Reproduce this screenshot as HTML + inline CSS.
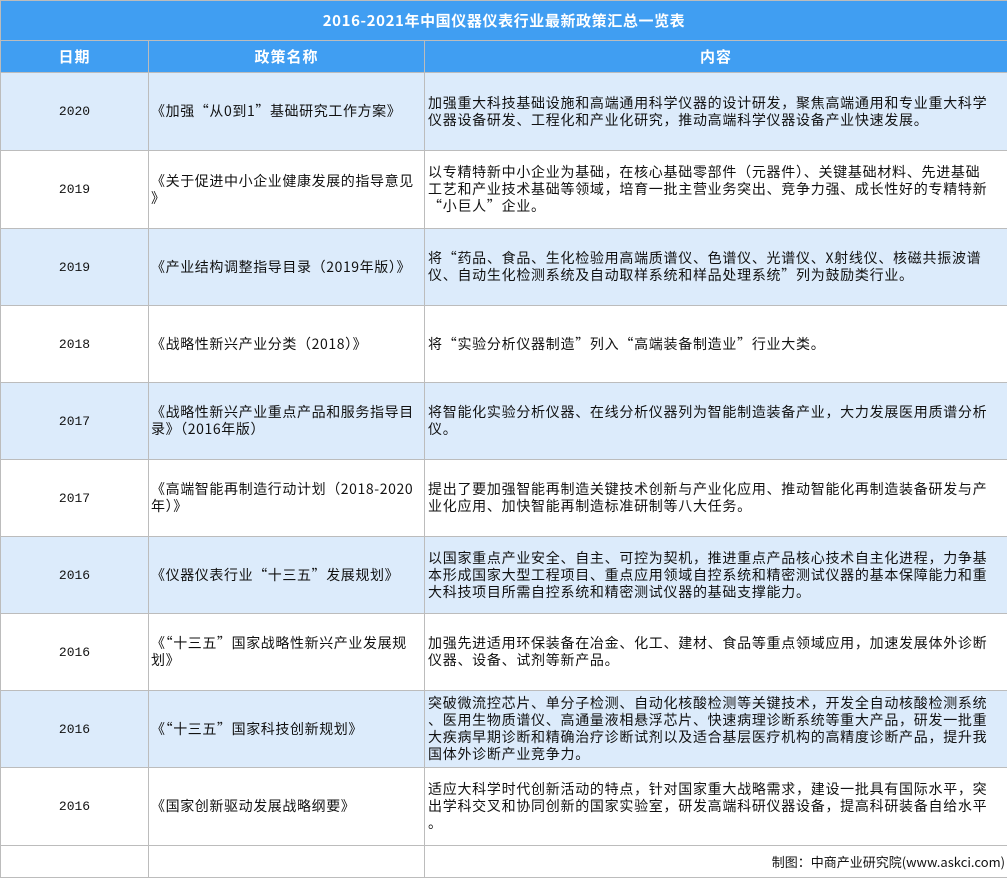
<!DOCTYPE html>
<html><head><meta charset="utf-8"><style>
body{margin:0;width:1007px;height:877px;background:#fff;font-family:"Noto Sans CJK SC","Liberation Sans",sans-serif;font-size:14px;color:#111;overflow:hidden}
table{border-collapse:collapse;width:1007px;table-layout:fixed;position:absolute;left:0;top:0}
td{border:1px solid #bcbcbc;padding:0 2px;line-height:17px;vertical-align:middle;letter-spacing:0.6px;white-space:nowrap}
.t{background:#409ef2;color:#fff;font-weight:bold;font-size:15px;text-align:center;height:39px}
.h td{background:#409ef2;color:#fff;font-weight:bold;font-size:15px;text-align:center;height:31px;letter-spacing:1px}
.b{background:#dcebfb}
td.c{text-align:center;font-family:"Liberation Mono",monospace;font-size:13px;letter-spacing:0}
td.d{text-align:left;padding-left:3px;letter-spacing:0.72px}
</style></head><body>
<table>
<colgroup><col style="width:148px"><col style="width:276px"><col style="width:583px"></colgroup>
<tr><td colspan="3" class="t">2016-2021年中国仪器仪表行业最新政策汇总一览表</td></tr>
<tr class="h"><td>日期</td><td>政策名称</td><td>内容</td></tr>
<tr class="b" style="height:78px"><td class="c">2020</td><td>《加强“从0到1”基础研究工作方案》</td><td class="d">加强重大科技基础设施和高端通用科学仪器的设计研发，聚焦高端通用和专业重大科学<br>仪器设备研发、工程化和产业化研究，推动高端科学仪器设备产业快速发展。</td></tr>
<tr style="height:78px"><td class="c">2019</td><td>《关于促进中小企业健康发展的指导意见<br>》</td><td class="d">以专精特新中小企业为基础，在核心基础零部件（元器件）、关键基础材料、先进基础<br>工艺和产业技术基础等领域，培育一批主营业务突出、竞争力强、成长性好的专精特新<br>“小巨人”企业。</td></tr>
<tr class="b" style="height:77px"><td class="c">2019</td><td>《产业结构调整指导目录（2019年版）》</td><td class="d">将“药品、食品、生化检验用高端质谱仪、色谱仪、光谱仪、X射线仪、核磁共振波谱<br>仪、自动生化检测系统及自动取样系统和样品处理系统”列为鼓励类行业。</td></tr>
<tr style="height:77px"><td class="c">2018</td><td>《战略性新兴产业分类（2018）》</td><td class="d">将“实验分析仪器制造”列入“高端装备制造业”行业大类。</td></tr>
<tr class="b" style="height:77px"><td class="c">2017</td><td>《战略性新兴产业重点产品和服务指导目<br>录》（2016年版）</td><td class="d">将智能化实验分析仪器、在线分析仪器列为智能制造装备产业，大力发展医用质谱分析<br>仪。</td></tr>
<tr style="height:77px"><td class="c">2017</td><td>《高端智能再制造行动计划（2018-2020<br>年）》</td><td class="d">提出了要加强智能再制造关键技术创新与产业化应用、推动智能化再制造装备研发与产<br>业化应用、加快智能再制造标准研制等八大任务。</td></tr>
<tr class="b" style="height:77px"><td class="c">2016</td><td>《仪器仪表行业“十三五”发展规划》</td><td class="d">以国家重点产业安全、自主、可控为契机，推进重点产品核心技术自主化进程，力争基<br>本形成国家大型工程项目、重点应用领域自控系统和精密测试仪器的基本保障能力和重<br>大科技项目所需自控系统和精密测试仪器的基础支撑能力。</td></tr>
<tr style="height:77px"><td class="c">2016</td><td>《“十三五”国家战略性新兴产业发展规<br>划》</td><td class="d">加强先进适用环保装备在冶金、化工、建材、食品等重点领域应用，加速发展体外诊断<br>仪器、设备、试剂等新产品。</td></tr>
<tr class="b" style="height:77px"><td class="c">2016</td><td>《“十三五”国家科技创新规划》</td><td class="d">突破微流控芯片、单分子检测、自动化核酸检测等关键技术，开发全自动核酸检测系统<br>、医用生物质谱仪、高通量液相悬浮芯片、快速病理诊断系统等重大产品，研发一批重<br>大疾病早期诊断和精确治疗诊断试剂以及适合基层医疗机构的高精度诊断产品，提升我<br>国体外诊断产业竞争力。</td></tr>
<tr style="height:78px"><td class="c">2016</td><td>《国家创新驱动发展战略纲要》</td><td class="d">适应大科学时代创新活动的特点，针对国家重大战略需求，建设一批具有国际水平，突<br>出学科交叉和协同创新的国家实验室，研发高端科研仪器设备，提高科研装备自给水平<br>。</td></tr>
<tr style="height:32px"><td></td><td></td><td style="text-align:right;font-size:13px;letter-spacing:0">制图：中商产业研究院(www.askci.com)</td></tr>
</table>
</body></html>
